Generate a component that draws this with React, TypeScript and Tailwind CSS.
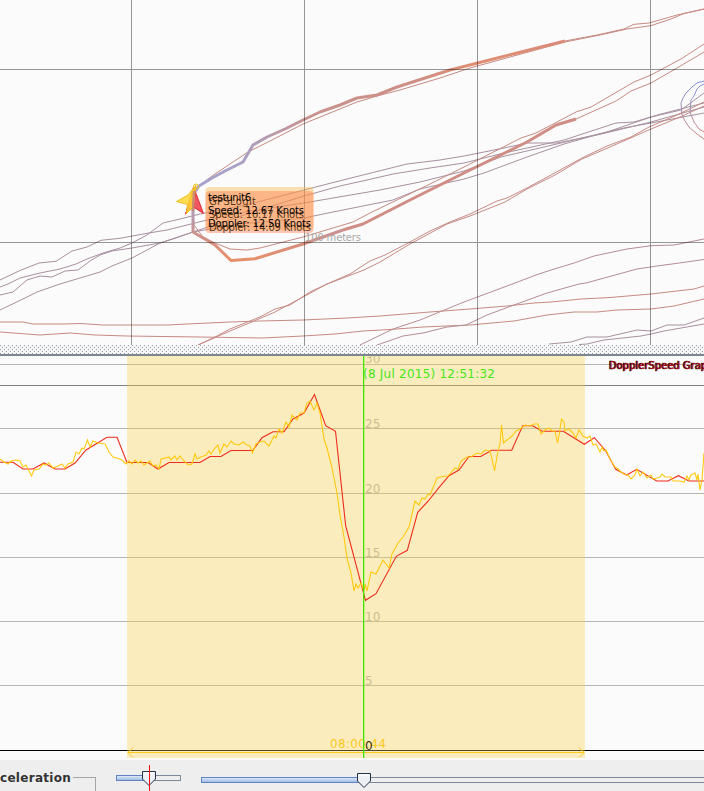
const slate = '#a8909f';
const rose = '#c68a83';
const mauve = '#b58d94';

// Thin GPS tracks on the map
const tracks = [
  { color: slate, points: '0,280 20,270.5 39,263 56,261.3 72,251 87,247 101,240.3 120,238.3 147,233.3 167,230 207,220 250,211 304,203 333,198 380,190 420,182 464,171 501,157 544,147 624,128 651,123 704,113' },
  { color: slate, points: '0,287 8,284 20,278 40,273 60,269 76,264 87,259 103,253 120,248 132,243 147,235 163,223 180,219 200,214 250,204 304,190 343,180 375,172 407,164 440,160 464,156 504,148 527,143 557,143 597,135 651,122 704,107' },
  { color: slate, points: '0,295 13,292 27,280 40,276 52,277 65,271 78,270 90,261 100,255 112,251 132,248 160,243 193,232 250,213 304,196 340,186 367,180 393,174 430,168 464,163 504,153 564,140 616,123 634,122 661,114 704,103' },
  { color: slate, points: '0,310 25,298 37,292 60,284 80,278 100,272 112,266 132,258 147,250 160,243 173,239 193,232 240,224 304,218 333,212 393,200 420,189 464,179 484,173 527,157 564,144 610,131 651,117 681,110 704,93' },
  { color: rose, points: '565,41 597,35 624,29 634,24.3 649,23 677,15 704,9' },
  { color: rose, points: '565,42 600,35 627,29 651,25.6 671,19 684,13.5 704,9' },
  { color: rose, points: '195,189 212,176 230,164 248,152 270,141 303,124 330,113 357,102 377,96 400,90 440,78 470,68 521,54 565,42' },
  { color: rose, points: '193,210 194,225 203,237 215,243 230,249 247,250 260,248 303,237 353,222 370,213 397,200 430,184 464,167 521,138 536,133 576,112 591,107 634,82 651,75 681,59 704,44' },
  { color: rose, points: '527,142 556,125 576,119 616,101 631,91 651,83 677,68 704,52' },
  { color: rose, points: '198,345 217,336 230,329 260,317 275,309 290,305 310,292 327,284 350,274 370,261 385,255 410,242 430,231 450,222 470,214 497,201 507,198 527,188 551,175 582,158 607,146 631,137 649,127 677,115 704,102' },
  { color: rose, points: '198,345 230,331 254,321 275,312 303,297 327,284 364,270 380,262 410,244 447,224 470,216 505,202 527,189 555,175 582,159 610,147 651,129 680,117 704,106' },
  { color: rose, points: '0,322 23,322 33,324 64,324 80,323.5 103,325 167,325 187,324 230,322 260,321 303,320 347,318 380,316 430,312 470,309 507,306 534,303 551,302 581,299 610,297.5 651,294 694,289 704,286' },
  { color: rose, points: '0,332 40,335 70,333 95,335 127,336 200,337 262,338 303,336 335,334 363,331 390,329.5 423,327 470,325 514,321 547,315 574,312 597,312 617,310 651,309 674,306 704,299' },
  { color: mauve, points: '360,345 393,329 420,320 464,302 507,286 536,275 551,270 574,263 594,256 627,249 651,245.7 674,245 704,239' },
  { color: mauve, points: '377,345 403,336 423,333 447,327 466,325 487,315 514,305 547,293 579,284 586,283 637,269 657,266 672,264 704,259.5' },
  { color: slate, points: '549,344 571,342 587,337 607,337 637,330 651,331 667,325 684,325 704,318' },
  { color: slate, points: '579,344.5 587,344 604,340 641,336 651,334 664,331 704,324' },
];

const dopplerPoints =
  '0,462.3 13,462.3 23,469 33,469 44,463 55,469 65,469 75,463 86,450 107,437.3 117,437.3 127,462.5 148,462.5 158,469 169,462.5 200,462.5 210,456.5 221,456.5 231,450.5 252.7,450.5 262,437.7 273,431.7 284,431.7 293,419 304,413 314.5,394.5 325.7,425.7 335.5,431.3 345.7,526 365.5,600.3 376,593.7 396.3,556.3 407.3,550.3 417.7,512.3 428.3,501 438.3,488.3 449,475.7 459,470 469,456.5 480.7,456.5 491.7,450.3 511.7,450.3 522.7,425.7 532.7,425.7 542.3,431.3 563.3,431.3 584.3,444.3 594.3,437.7 605.7,450.7 615.7,469.3 626.7,475 636.7,469.3 656.7,481 668,481 678.3,475.7 689,481 704,481';

const speedPoints =
  '0,459 4,462 8,464 11,461 16,460 20,461 23,467 26,465 29,471 31.5,476 34,470 39,469 43,464 46,465 49,463 53,468 58,466 62,464 65,468 68,464 73,462 76,452 79,454 82,448 84,449 87.5,440 90,447 93,441 98,443 105,444 109,452 113,457 117,458 122,460 126,464 129,461 132,464 135,460 138,463 141,461 144,465 147,463 150,461 153,466 156,465 159,469 161,459 165,458 169,457 171,460 175,456 177,460 180,456 184,461 188,465 192,464 195,454 197,459 201,457 206,455 209,451 211,454 215,448 218,445 220,453 224,444 227,447 231,441 234,444 239,445 243,442 247,445 250,446 252.5,453 256,444 260,442 264,441 269,446 274,436 276,438 279,429 282,433 286,422 289,427 292,415 297,420 300,413 304,413 307,403 310,401 314,410 317,403 320,413 324,439 327,448 332,468 337,493 340,515 344,537 347,558 351,573 354,591 356,584 358,588 361,583 364,591 365,584 367,591 371,572 376,574 383,560 389,568 392,554 398,543 403,537 409,527 415,501 419,505 422,498 425,499 428,494 430,495 437,478 440,477 448,476 455,468 458,469 461,461 467,457 471,457 477,453 481,454 485,450 490,451 492,459 494.5,471 498,451 500,444 501.5,425 503.5,443 507,440 512,436 516,431 520,429 525,425 530,426 534,424 538,424 541,434 545,430 549,428 552,431 555,431 557.5,443 559.5,433 561.5,419 564,422 565,431 569,429 573,433 576,438 579,430 583,436 587,438 590,436 593,445 596,444 600,452 602,447 604,451 606,450 610,459 615,467 618,469 621,472 624,474 628,475 631,479 635,475 637,469 640,476 643,472 647,478 651,475 653,479 657,478 660,477 662,474 665,477 671,477 673,481 680,481 684,482 687,476 689,480 691,475 695,473 697,480 698,474 700,490 702,480 704,453';

const speedLabels = [
  { value: '30', y: 363 },
  { value: '25', y: 428 },
  { value: '20', y: 493 },
  { value: '15', y: 557 },
  { value: '10', y: 621 },
  { value: '5', y: 685 },
];

const MapView = () => (
  <svg className="block h-[345px] w-full bg-[#fbfbfb]" viewBox="0 0 704 345">
    <defs>
      <linearGradient id="trackOut" gradientUnits="userSpaceOnUse" x1="193" y1="0" x2="565" y2="0">
        <stop offset="0" stopColor="#a6a2d0" />
        <stop offset="0.13" stopColor="#aaa0c4" />
        <stop offset="0.3" stopColor="#c8938f" />
        <stop offset="0.6" stopColor="#cf8f85" />
        <stop offset="0.75" stopColor="#e08e72" />
        <stop offset="1" stopColor="#d98c7a" />
      </linearGradient>
      <linearGradient id="trackIn" gradientUnits="userSpaceOnUse" x1="0" y1="190" x2="0" y2="258">
        <stop offset="0" stopColor="#aaa4cc" />
        <stop offset="0.4" stopColor="#b79ab0" />
        <stop offset="0.7" stopColor="#d18e84" />
        <stop offset="1" stopColor="#e58f6c" />
      </linearGradient>
      <linearGradient id="turn" x1="0" y1="0" x2="0" y2="1">
        <stop offset="0" stopColor="#7f92e0" />
        <stop offset="0.45" stopColor="#a48db0" />
        <stop offset="1" stopColor="#cc8580" />
      </linearGradient>
    </defs>

    {/* Tracks */}
    <g fill="none" strokeWidth="1">
      {tracks.map((t) => (
        <polyline key={t.points} points={t.points} stroke={t.color} />
      ))}
      <polyline points="704,81 697,83 692,87 686,93 683,98 681,103 682,115 685,121 689,127 697,134 704,139" stroke="url(#turn)" />
      <polyline points="704,84 700,86 697,89 694,96 691,100 690,112 694,122 699,129 704,132" stroke="url(#turn)" />
    </g>
    <g fill="none" strokeWidth="3" strokeLinejoin="round">
      <polyline points="195,192 199,186 212,178 227,170 243,162 253,145 267,137 285,129 303,120 320,112 340,105 357,98 377,95 397,87 450,70 464,66.5 521,52 565,41" stroke="url(#trackOut)" />
      <polyline points="195,188 193,210 193,232 215,245 231,260.5 255,258.7 303,244 343,230" stroke="url(#trackIn)" />
      <polyline points="343,230 363,224 410,200 464,173 527,142 556,125 576,119" stroke="#cf8d85" />
    </g>

    {/* Grid */}
    <path d="M131.5 0V345M304.5 0V345M477.5 0V345M650.5 0V345M0 69.5H704M0 242.5H704" stroke="#000" strokeOpacity="0.4" shapeRendering="crispEdges" />
    <text x="305" y="241" fontSize="10" textLength="56" fill="#a9a9a9">100 meters</text>

    {/* Boat markers */}
    <path d="M193.5 187L203.5 213.5L193.5 207L185.5 214Z" fill="#ee3b45" fillOpacity="0.85" stroke="#e8232f" />
    <path d="M196 185L193 207L186.5 213.5L187.5 204.5L176.5 201.5L188 195Z" fill="#ffd633" fillOpacity="0.85" stroke="#eebf20" />
    <path d="M193 211L194 191" stroke="#cc8a72" strokeWidth="2.5" />
    <circle cx="196" cy="186.5" r="2.5" fill="none" stroke="#f2c21a" />

    {/* Boat info boxes */}
    <rect x="205.5" y="187" width="108" height="43" rx="4" fill="#f7b94b" fillOpacity="0.42" />
    <rect x="205.5" y="191" width="108" height="42" rx="4" fill="#ff7a4c" fillOpacity="0.42" />
    <g fontSize="10" fill="#3a1c00" fillOpacity="0.85">
      <text x="209" y="204.5" textLength="47">GPSLogit</text>
      <text x="209" y="217.5" textLength="95">Speed: 10.17 Knots</text>
      <text x="209" y="230.5" textLength="102">Doppler: 14.09 Knots</text>
    </g>
    <g fontSize="10" fill="#000">
      <text x="208" y="200.5" textLength="43">testunit6</text>
      <text x="208" y="213.5" textLength="96">Speed: 12.67 Knots</text>
      <text x="208" y="226.5" textLength="103">Doppler: 12.50 Knots</text>
    </g>
  </svg>
);

const SpeedGraph = () => (
  <svg className="block h-[404px] w-full bg-[#fbfbfb]" viewBox="0 356 704 404">
    {/* Speed scale */}
    <g fill="#b4b4b4" fontSize="12">
      {speedLabels.map((l) => (
        <text key={l.value} x="365" y={l.y}>{l.value}</text>
      ))}
    </g>
    <path d="M0 364.5H704M0 428.5H704M0 493.5H704M0 557.5H704M0 621.5H704M0 685.5H704" stroke="#b4b4b4" shapeRendering="crispEdges" />
    <path d="M0 385.5H704" stroke="#808080" shapeRendering="crispEdges" />
    <path d="M0 750.5H704" stroke="#000" shapeRendering="crispEdges" />

    {/* Selected time range */}
    <rect x="127" y="356" width="458" height="402" fill="#f9cf45" fillOpacity="0.34" />
    <g fill="none" stroke="#fccb1a">
      <path d="M128 752.5H584" shapeRendering="crispEdges" />
      <path d="M133 747.5L128 752.5L133 757.5M579 747.5L584 752.5L579 757.5" />
    </g>
    <text x="330" y="748" fontSize="12" textLength="56" fill="#fac821">08:00:44</text>
    <text x="365" y="750" fontSize="12" fill="#3b3111">0</text>

    {/* Speed lines */}
    <polyline points={dopplerPoints} fill="none" stroke="#f02a1c" strokeWidth="1.1" />
    <polyline points={speedPoints} fill="none" stroke="#ffc90e" strokeWidth="1.1" />

    {/* Current time */}
    <rect x="363" y="356" width="1.3" height="402" fill="#3fe600" />
    <text x="363" y="378" fontSize="12" textLength="132" fill="#45e619">(8 Jul 2015) 12:51:32</text>

    <g fontSize="10">
      <text x="608.5" y="369" fill="#000" stroke="#000" strokeWidth="0.4">DopplerSpeed Graph</text>
      <text x="609.5" y="368.5" fill="#b80d18" stroke="#b80d18" strokeWidth="0.2">DopplerSpeed Graph</text>
    </g>
  </svg>
);

const Thumb = () => (
  <svg className="h-4 w-4 shrink-0" viewBox="0 0 16 16">
    <path d="M1.5 1.5H14.5V9L8 15.5L1.5 9Z" fill="#edf1f6" stroke="#24324a" />
    <path d="M3 3H13" stroke="#fff" />
  </svg>
);

const Controls = () => (
  <div className="flex h-[31px] w-full items-start bg-[#eeeeee]">
    {/* Acceleration group, only its right end is visible */}
    <div className="flex h-full w-[96px] items-start">
      <span className="mt-[11px] w-[73px] text-[12px] font-bold leading-[15px] tracking-[0.3px] text-[#333333]">celeration</span>
      <div className="mt-[17px] h-[14px] w-[23px] border-t border-r border-[#a5a5a5]" />
    </div>

    <div className="relative mt-[10px] ml-5 flex h-4 w-[65px] items-center">
      <div className="flex h-[6px] w-full border border-[#7a8a99]">
        <div className="-m-px w-[34px] border border-[#6382bf] bg-linear-to-b from-[#dbe8f7] to-[#9dbde4]" />
      </div>
      <div className="absolute left-[25px] top-0">
        <Thumb />
      </div>
      <div className="absolute -top-[5px] left-[33px] h-[26px] w-px bg-[#ff0a0a]" />
    </div>

    <div className="relative mt-3 ml-5 flex h-4 flex-1 items-center">
      <div className="flex h-[6px] w-full border border-r-0 border-[#7a8a99]">
        <div className="-m-px w-[164px] border border-[#6382bf] bg-linear-to-b from-[#dbe8f7] to-[#9dbde4]" />
      </div>
      <div className="absolute left-[155px] top-0">
        <Thumb />
      </div>
    </div>
  </div>
);

const App = () => {
  return (
    <div className="flex h-[791px] w-[704px] flex-col overflow-hidden bg-[#eeeeee] font-['DejaVu_Sans',sans-serif]">
      <MapView />
      {/* Split pane divider */}
      <div className="h-[9px] w-full bg-[#f4f5f6] bg-[radial-gradient(circle_at_0.5px_0.5px,#99a0a6_0.5px,transparent_0.6px),radial-gradient(circle_at_2.5px_2.5px,#99a0a6_0.5px,transparent_0.6px)] bg-size-[4px_4px]" />
      <div className="h-[2px] w-full bg-[#7d8590]" />
      <SpeedGraph />
      <Controls />
    </div>
  );
};

export default App;
